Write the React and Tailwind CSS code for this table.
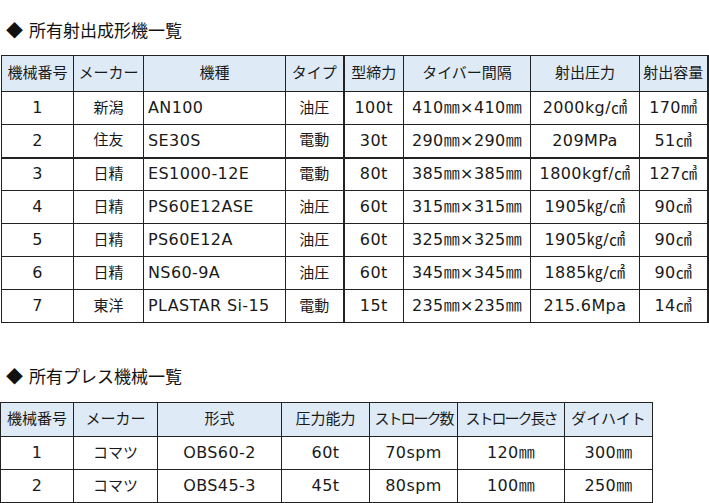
import React from "react";

const MOLDING = [
  ["1", "新潟", "AN100", "油圧", "100t", "410㎜×410㎜", "2000kg/㎠", "170㎣"],
  ["2", "住友", "SE30S", "電動", "30t", "290㎜×290㎜", "209MPa", "51㎤"],
  ["3", "日精", "ES1000-12E", "電動", "80t", "385㎜×385㎜", "1800kgf/㎠", "127㎤"],
  ["4", "日精", "PS60E12ASE", "油圧", "60t", "315㎜×315㎜", "1905㎏/㎠", "90㎤"],
  ["5", "日精", "PS60E12A", "油圧", "60t", "325㎜×325㎜", "1905㎏/㎠", "90㎤"],
  ["6", "日精", "NS60-9A", "油圧", "60t", "345㎜×345㎜", "1885㎏/㎠", "90㎤"],
  ["7", "東洋", "PLASTAR Si-15", "電動", "15t", "235㎜×235㎜", "215.6Mpa", "14㎤"],
];

const PRESS = [
  ["1", "コマツ", "OBS60-2", "60t", "70spm", "120㎜", "300㎜"],
  ["2", "コマツ", "OBS45-3", "45t", "80spm", "100㎜", "250㎜"],
];

// columns holding only Japanese text keep the smaller size
const isKanaCell = (c) => !/[0-9A-Za-z]/.test(c);

function Title({ children }) {
  return (
    <h2
      className="flex items-center h-[20px] pl-[6px] text-[17px] leading-[20px] font-normal text-[#111]"
      style={{ fontFamily: '"Noto Sans CJK JP", sans-serif' }}
    >
      <span className="mr-[6px] text-[17px]">◆</span>
      {children}
    </h2>
  );
}

export default function App() {
  const font = { fontFamily: '"DejaVu Sans", "Noto Sans CJK JP", sans-serif' };
  return (
    <div className="bg-white w-[709px] h-[503px] overflow-hidden text-[#1a1a1a]" style={font}>
      <div className="pt-[20px]">
        <Title>所有射出成形機一覧</Title>
      </div>

      <table className="mt-[15px] ml-[1px] table-fixed border-collapse text-[15px] leading-none">
        <colgroup>
          <col className="w-[72px]" />
          <col className="w-[70px]" />
          <col className="w-[142px]" />
          <col className="w-[58px]" />
          <col className="w-[60px]" />
          <col className="w-[127px]" />
          <col className="w-[109px]" />
          <col className="w-[68px]" />
        </colgroup>
        <thead>
          <tr className="h-[36px] bg-[#deeaf6]">
            {["機械番号", "メーカー", "機種", "タイプ", "型締力", "タイバー間隔", "射出圧力", "射出容量"].map((h, i) => (
              <th
                key={h}
                className={`border border-[#222] font-normal text-center whitespace-nowrap ${i === 4 ? "border-l-2" : ""} ${i === 7 ? "border-r-2" : ""}`}
              >
                {h}
              </th>
            ))}
          </tr>
        </thead>
        <tbody>
          {MOLDING.map((row, r) => (
            <tr key={r} className="h-[33px]">
              {row.map((c, i) => (
                <td
                  key={i}
                  className={`border border-[#222] whitespace-nowrap ${isKanaCell(c) ? "" : "text-[16px] tracking-[0.4px]"} ${i === 2 ? "text-left pl-[4px]" : "text-center"} ${i === 4 ? "border-l-2" : ""} ${i === 7 ? "border-r-2" : ""} ${r === 1 ? "border-b-2" : ""}`}
                >
                  {c}
                </td>
              ))}
            </tr>
          ))}
        </tbody>
      </table>

      <div className="mt-[43px]">
        <Title>所有プレス機械一覧</Title>
      </div>

      <table className="mt-[16px] table-fixed border-collapse text-[15px] leading-none">
        <colgroup>
          <col className="w-[73px]" />
          <col className="w-[84px]" />
          <col className="w-[124px]" />
          <col className="w-[88px]" />
          <col className="w-[88px]" />
          <col className="w-[107px]" />
          <col className="w-[88px]" />
        </colgroup>
        <thead>
          <tr className="h-[34px] bg-[#deeaf6]">
            {["機械番号", "メーカー", "形式", "圧力能力", "ストローク数", "ストローク長さ", "ダイハイト"].map((h, i) => (
              <th
                key={h}
                className={`border border-[#222] font-normal text-center whitespace-nowrap ${i === 4 || i === 5 ? "tracking-[-2px]" : ""}`}
              >
                {h}
              </th>
            ))}
          </tr>
        </thead>
        <tbody>
          {PRESS.map((row, r) => (
            <tr key={r} className="h-[33px]">
              {row.map((c, i) => (
                <td
                  key={i}
                  className={`border border-[#222] text-center whitespace-nowrap ${isKanaCell(c) ? "" : "text-[16px] tracking-[0.4px]"}`}
                >
                  {c}
                </td>
              ))}
            </tr>
          ))}
        </tbody>
      </table>
    </div>
  );
}
